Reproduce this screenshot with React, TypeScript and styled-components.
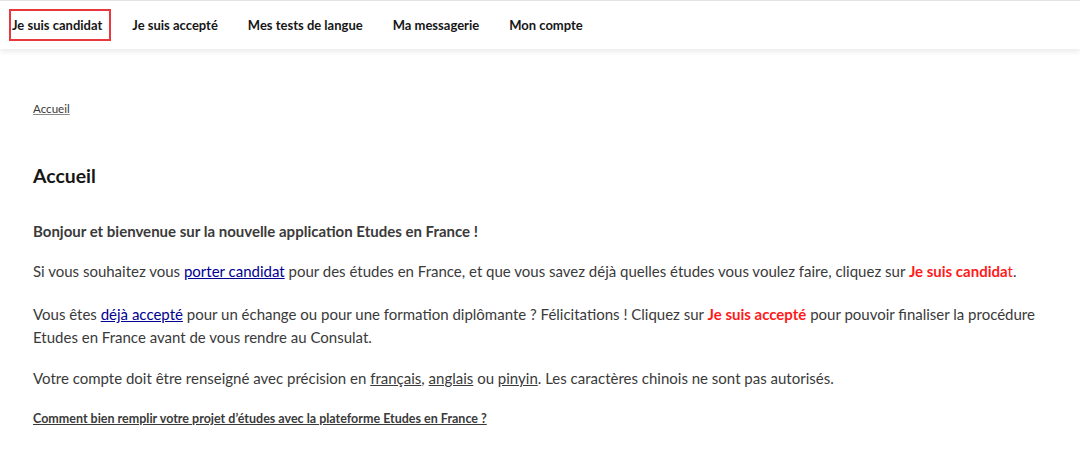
import React from "react";
import styled, { createGlobalStyle } from "styled-components";

const Global = createGlobalStyle`
  html, body { margin: 0; padding: 0; background: #fff; }
  body { font-family: Lato, "Open Sans", sans-serif; color: #3a3a3a; }
`;

const Page = styled.div`
  display: flex;
  flex-direction: column;
  width: 1080px;
`;

const Nav = styled.nav`
  height: 48px;
  border-top: 1px solid #e3e3e3;
  box-shadow: 0 3px 5px rgba(0, 0, 0, 0.08);
  display: flex;
  align-items: center;
  padding-left: 9px;
  gap: 18px;
`;

const NavItem = styled.a<{ $active?: boolean }>`
  display: flex;
  align-items: center;
  height: 32px;
  padding: 0 7px 0 1px;
  box-sizing: border-box;
  border: 2px solid ${(p) => (p.$active ? "#e8383d" : "transparent")};
  font-size: 13px;
  font-weight: 700;
  color: #161616;
  text-decoration: none;
  cursor: pointer;
`;

const Main = styled.main`
  display: flex;
  flex-direction: column;
  padding: 53px 5px 0 33px;
`;

const Crumb = styled.a`
  font-size: 11.6px;
  color: #3a3a3a;
  text-decoration: underline;
  text-decoration-color: #888;
  align-self: flex-start;
`;

const Title = styled.h1`
  margin: 47px 0 0;
  font-size: 19.4px;
  font-weight: 700;
  color: #161616;
  line-height: 28px;
`;

const Para = styled.p<{ $bold?: boolean; $gap?: number }>`
  margin: 0;
  margin-top: ${(p) => p.$gap ?? 16}px;
  font-size: 15px;
  line-height: 23px;
  font-weight: ${(p) => (p.$bold ? 700 : 400)};
`;

const BlueLink = styled.a`
  color: #000091;
  text-decoration: underline;
`;

const Underline = styled.span`
  text-decoration: underline;
`;

const Red = styled.span<{ $light?: boolean }>`
  color: #ff1a1a;
  font-weight: ${(p) => (p.$light ? 400 : 700)};
`;

const Guide = styled.a`
  margin-top: 21px;
  font-size: 12.5px;
  font-weight: 700;
  color: #3a3a3a;
  text-decoration: underline;
  align-self: flex-start;
`;

export default function App() {
  return (
    <Page>
      <Global />
      <Nav>
        <NavItem $active>Je suis candidat</NavItem>
        <NavItem>Je suis accepté</NavItem>
        <NavItem>Mes tests de langue</NavItem>
        <NavItem>Ma messagerie</NavItem>
        <NavItem>Mon compte</NavItem>
      </Nav>
      <Main>
        <Crumb>Accueil</Crumb>
        <Title>Accueil</Title>
        <Para $bold $gap={30}>
          Bonjour et bienvenue sur la nouvelle application Etudes en France !
        </Para>
        <Para $gap={17}>
          Si vous souhaitez vous <BlueLink>porter candidat</BlueLink> pour des études en France, et que vous savez déjà quelles études vous voulez faire, cliquez sur <Red>Je suis candida</Red><Red $light>t</Red>.
        </Para>
        <Para $gap={20}>
          Vous êtes <BlueLink>déjà accepté</BlueLink> pour un échange ou pour une formation diplômante ? Félicitations ! Cliquez sur <Red>Je suis accepté</Red> pour pouvoir finaliser la procédure Etudes en France avant de vous rendre au Consulat.
        </Para>
        <Para $gap={18}>
          Votre compte doit être renseigné avec précision en <Underline>français</Underline>, <Underline>anglais</Underline> ou <Underline>pinyin</Underline>. Les caractères chinois ne sont pas autorisés.
        </Para>
        <Guide>Comment bien remplir votre projet d’études avec la plateforme Etudes en France ?</Guide>
      </Main>
    </Page>
  );
}
